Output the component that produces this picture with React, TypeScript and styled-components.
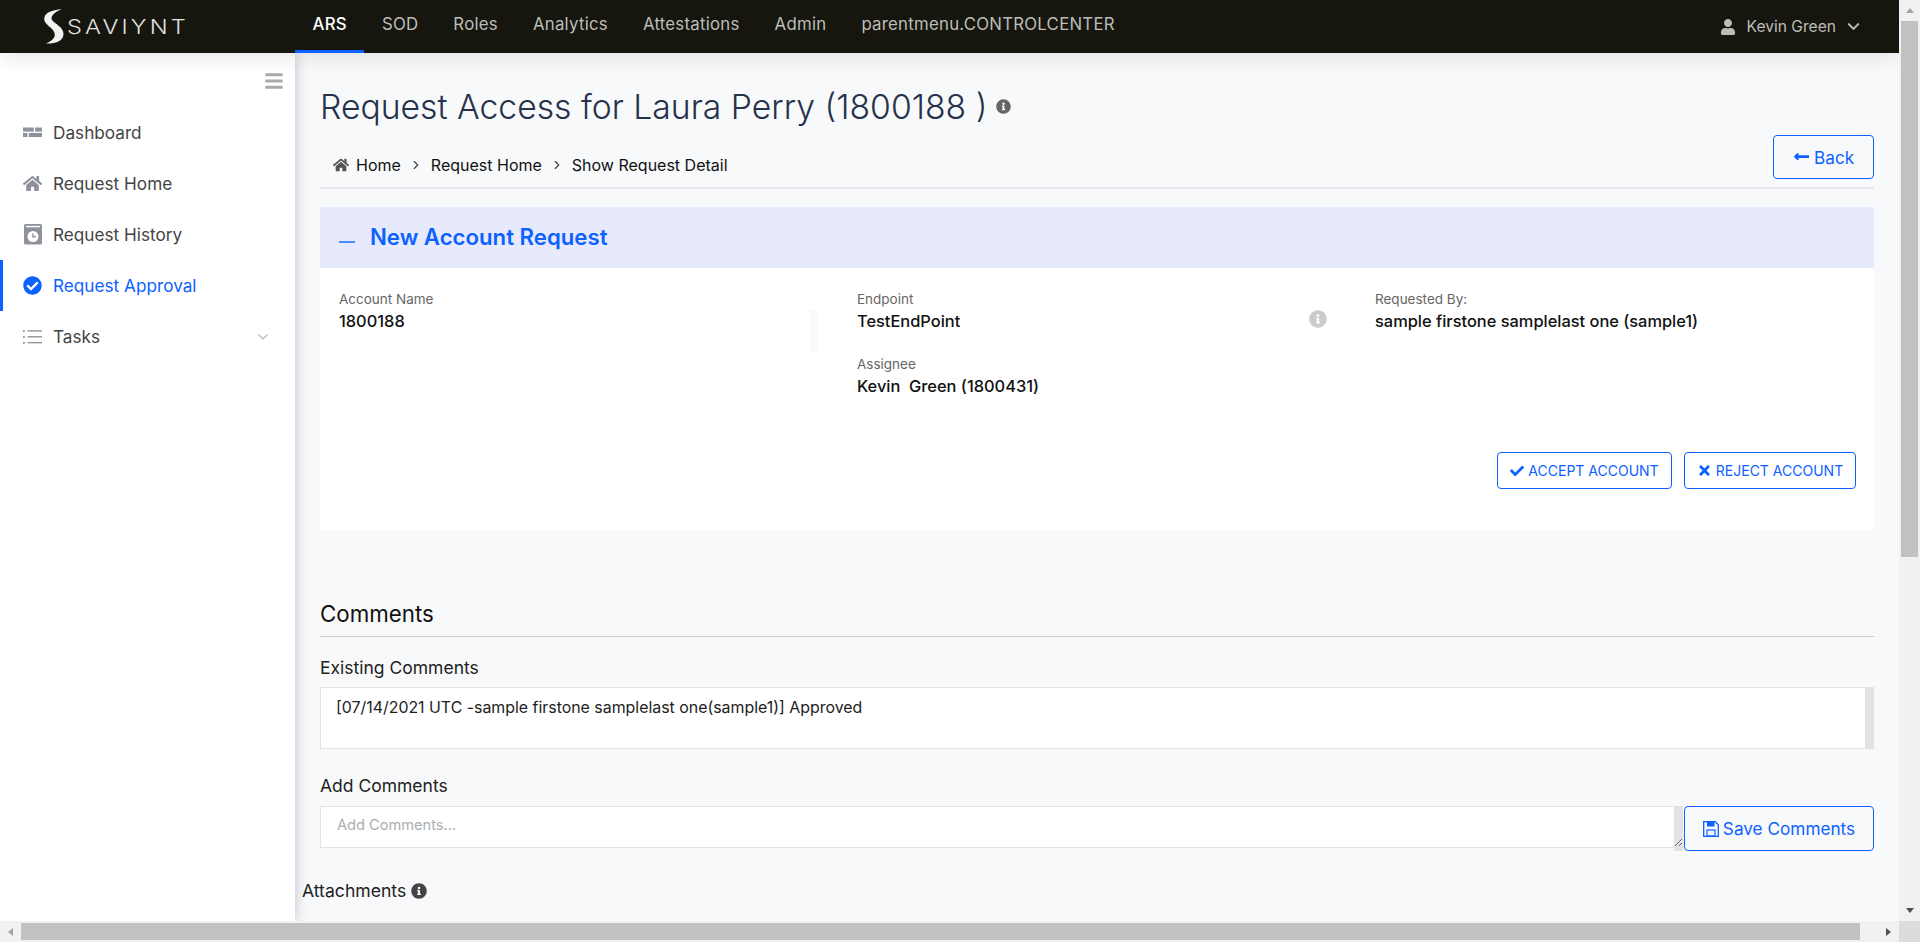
import React from 'react';
import styled, { createGlobalStyle } from 'styled-components';
import { FaHome, FaInfoCircle, FaCheck, FaTimes, FaUser, FaBars, FaCheckCircle, FaLongArrowAltLeft } from 'react-icons/fa';
import { LuChevronDown, LuChevronRight } from 'react-icons/lu';

const BLUE = '#0d62ff';
const FONT = `Inter, Roboto, "Liberation Sans", sans-serif`;

const Global = createGlobalStyle`
  html, body { margin: 0; padding: 0; height: 100%; overflow: hidden; }
  body { font-family: ${FONT}; color: #111; background: #f8f9fb; }
  * { box-sizing: border-box; }
`;

const Frame = styled.div`
  width: 100vw;
  height: 100vh;
  display: grid;
  grid-template-columns: 1fr 21px;
  grid-template-rows: 1fr 21px;
  background: #f8f9fb;
`;

const Viewport = styled.div`
  overflow: hidden;
  min-width: 0;
  min-height: 0;
`;

const VBar = styled.div`
  display: flex;
  flex-direction: column;
  background: #f1f1f1;
`;

const HBar = styled.div`
  display: flex;
  background: #f1f1f1;
`;

const Corner = styled.div`
  background: #dcdcdc;
`;

const ArrowCell = styled.div`
  width: 21px;
  height: 21px;
  flex: none;
  display: flex;
  align-items: center;
  justify-content: center;
`;

const VEnd = styled.div`
  margin-top: auto;
`;

const HEnd = styled.div`
  margin-left: auto;
`;

const Arrow = styled.span<{ $dir: 'up' | 'down' | 'left' | 'right'; $c: string }>`
  width: 0;
  height: 0;
  border-style: solid;
  border-color: transparent;
  ${(p) => p.$dir === 'up' && `border-width: 0 4.5px 5px; border-bottom-color: ${p.$c};`}
  ${(p) => p.$dir === 'down' && `border-width: 5px 4.5px 0; border-top-color: ${p.$c};`}
  ${(p) => p.$dir === 'left' && `border-width: 4.5px 5px 4.5px 0; border-right-color: ${p.$c};`}
  ${(p) => p.$dir === 'right' && `border-width: 4.5px 0 4.5px 5px; border-left-color: ${p.$c};`}
`;

const VThumb = styled.div`
  height: 536px;
  margin: 0 2px;
  background: #c1c1c1;
`;

const HThumb = styled.div`
  width: 1839px;
  margin: 2px 0;
  background: #c1c1c1;
`;

const Shell = styled.div`
  width: 1918px;
  height: 100%;
  display: flex;
  flex-direction: column;
`;

const Header = styled.header`
  position: relative;
  z-index: 5;
  width: 1899px;
  height: 53px;
  flex: none;
  display: flex;
  align-items: stretch;
  background: #16160f;
  box-shadow: 0 4px 20px rgba(0, 0, 0, 0.1);
`;

const Logo = styled.div`
  width: 295px;
  flex: none;
  display: flex;
  align-items: center;
  padding-left: 43px;
  gap: 3px;
  color: #e2e2e2;
`;

const LogoText = styled.span`
  font-size: 19.5px;
  font-weight: 300;
  letter-spacing: 2.6px;
  transform: scaleX(1.21);
  transform-origin: left center;
`;

const Nav = styled.nav`
  display: flex;
  flex: 1;
`;

const Tab = styled.a<{ $active?: boolean }>`
  display: flex;
  align-items: center;
  padding: 0 17.5px 3px;
  height: 53px;
  font-size: 16.8px;
  letter-spacing: 0.25px;
  font-weight: ${(p) => (p.$active ? 500 : 400)};
  color: ${(p) => (p.$active ? '#fff' : '#bdbdb9')};
  border-bottom: 3px solid ${(p) => (p.$active ? BLUE : 'transparent')};
`;

const UserBox = styled.div`
  display: flex;
  align-items: center;
  color: #bdbdb9;
  font-size: 15.6px;
  padding-right: 36px;
  gap: 11px;
`;

const UserChevron = styled(LuChevronDown)`
  font-size: 19px;
  margin-left: -3px;
  stroke-width: 2.6;
`;

const Body = styled.div`
  display: flex;
  flex: 1;
  min-height: 0;
`;

const Sidebar = styled.aside`
  width: 295px;
  flex: none;
  background: #fff;
  box-shadow: 0 0 12px rgba(40, 40, 60, 0.28);
  padding-top: 18px;
  z-index: 2;
`;

const Burger = styled.div`
  display: flex;
  justify-content: flex-end;
  padding-right: 11px;
  height: 36px;
  color: #aaa;
  font-size: 20px;
`;

const SideList = styled.ul`
  list-style: none;
  margin: 0;
  padding: 0;
`;

const SideItem = styled.li<{ $active?: boolean }>`
  display: flex;
  align-items: center;
  height: 51px;
  padding: 0 0 0 23px;
  gap: 11px;
  font-size: 17.2px;
  color: ${(p) => (p.$active ? BLUE : '#444')};
  box-shadow: ${(p) => (p.$active ? `inset 3px 0 0 ${BLUE}` : 'none')};
`;

const SideIcon = styled.span<{ $active?: boolean }>`
  width: 19px;
  height: 20px;
  display: flex;
  align-items: center;
  justify-content: center;
  font-size: 19px;
  color: ${(p) => (p.$active ? BLUE : '#8e939b')};
`;

const SideChevron = styled.span`
  margin-left: auto;
  margin-right: 24px;
  color: #bbb;
  font-size: 16px;
  display: flex;
`;

const Main = styled.main`
  flex: 1;
  min-width: 0;
  padding: 29px 44px 0 25px;
`;

const Title = styled.h1`
  margin: 0;
  height: 48px;
  display: flex;
  align-items: center;
  gap: 9px;
  font-size: 33.7px;
  font-weight: 300;
  color: #26324a;
  & svg { font-size: 15px; color: #666; }
`;

const CrumbRow = styled.div`
  height: 59px;
  display: flex;
  justify-content: space-between;
  border-bottom: 2px solid #e6e8eb;
`;

const Crumbs = styled.div`
  align-self: flex-end;
  height: 24px;
  margin-bottom: 10px;
  padding-left: 13px;
  display: flex;
  align-items: center;
  font-size: 16px;
  color: #111;
`;

const HomeGlyph = styled(FaHome)`
  font-size: 16px;
  color: #555;
  margin-right: 7px;
`;

const CrumbSep = styled(LuChevronRight)`
  font-size: 14px;
  color: #444;
  margin: 0 8px;
`;

const OutlineButton = styled.button<{ $h: number; $w: number; $fs: number }>`
  width: ${(p) => p.$w}px;
  height: ${(p) => p.$h}px;
  flex: none;
  display: inline-flex;
  align-items: center;
  justify-content: center;
  gap: 4px;
  padding: 0;
  border: 1px solid ${BLUE};
  border-radius: 4px;
  background: transparent;
  color: ${BLUE};
  font-family: ${FONT};
  font-size: ${(p) => p.$fs}px;
  & svg { flex: none; }
`;

const BackButton = styled(OutlineButton)`
  margin-top: 5px;
`;

const PanelHead = styled.div`
  margin-top: 18px;
  height: 61px;
  background: #e7eafc;
  display: flex;
  align-items: center;
  padding: 0 0 2px 19px;
  gap: 15px;
  font-size: 22.2px;
  font-weight: 600;
  color: ${BLUE};
`;

const Dash = styled.span`
  width: 16px;
  height: 1.5px;
  background: #4d8bff;
  margin-top: 11px;
`;

const PanelBody = styled.div`
  background: #fff;
  height: 262px;
  padding: 22px 18px 41px 19px;
`;

const Columns = styled.div`
  display: grid;
  grid-template-columns: repeat(3, 518px);
  height: 108px;
`;

const Col = styled.div<{ $pr?: number }>`
  display: flex;
  justify-content: space-between;
  align-items: flex-start;
  padding-right: ${(p) => p.$pr ?? 0}px;
`;

const Label = styled.div<{ $gap?: boolean }>`
  font-size: 13.5px;
  line-height: 18px;
  color: #666;
  margin-top: ${(p) => (p.$gap ? 22 : 0)}px;
`;

const Value = styled.div`
  font-size: 16.4px;
  line-height: 24px;
  font-weight: 500;
  color: #111;
  margin-top: 1px;
`;

const FaintBar = styled.div`
  width: 9px;
  height: 42px;
  margin-top: 20px;
  background: #fafafa;
`;

const MutedInfo = styled(FaInfoCircle)`
  font-size: 18px;
  color: #ccc;
  margin-top: 20px;
`;

const Actions = styled.div`
  display: flex;
  justify-content: flex-end;
  gap: 12px;
  margin-top: 54px;
`;

const SectionTitle = styled.h2`
  margin: 70px 0 0;
  font-size: 22.3px;
  line-height: 28px;
  font-weight: 400;
  padding-bottom: 8px;
  border-bottom: 1px solid #ccc;
  color: #111;
`;

const FieldLabel = styled.div<{ $mt: number }>`
  margin-top: ${(p) => p.$mt}px;
  font-size: 17.5px;
  line-height: 24px;
  color: #222;
`;

const GUTTER = 'linear-gradient(to left, #e2e2e2 9px, #fff 9px)';

const CommentLog = styled.div`
  margin-top: 7px;
  height: 62px;
  background: ${GUTTER};
  border: 1px solid #e2e2e2;
  border-right: 0;
  padding: 9px 15px;
  font-size: 15.9px;
  line-height: 22px;
  color: #222;
`;

const CommentRow = styled.div`
  margin-top: 8px;
  display: flex;
  gap: 1px;
  align-items: flex-start;
`;

const InputWrap = styled.div`
  position: relative;
  width: 1363px;
  height: 42px;
  flex: none;
  &::after {
    content: '';
    position: absolute;
    top: 100%;
    right: 0;
    width: 9px;
    height: 3px;
    background: #e2e2e2;
  }
`;

const CommentInput = styled.textarea`
  display: block;
  width: 100%;
  height: 42px;
  resize: vertical;
  border: 1px solid #e2e2e2;
  border-right: 0;
  background: ${GUTTER};
  padding: 8px 16px;
  font-family: ${FONT};
  font-size: 14.6px;
  line-height: 20px;
  color: #222;
  outline: none;
  &::placeholder { color: #a9adb3; }
`;

const Attachments = styled.div`
  margin: 28px 0 0 -18px;
  display: flex;
  align-items: center;
  gap: 5px;
  font-size: 17.6px;
  line-height: 24px;
  color: #222;
  & svg { font-size: 16px; color: #444; }
`;

const LogoMark = () => (
  <svg width="21" height="35" viewBox="0 0 21 35" fill="#f2f2f2" aria-hidden="true">
    <path d="M19 0C10 1 3 3 1.500 8C0 13 5 16 9 20C12 23 13 27 10 30C8 32 5 33.500 3 34.500C10 35 20.500 33 20.500 25C20.500 18 12 15 9 11C7 8 11 3 19 0Z" />
  </svg>
);

const DashIcon = () => (
  <svg width="21" height="11" viewBox="0 0 21 11" fill="currentColor" aria-hidden="true">
    <rect x="0" y="0" width="12" height="4.500" />
    <rect x="13.500" y="0" width="7.500" height="4.500" />
    <rect x="0" y="6" width="5" height="4.500" />
    <rect x="6.500" y="6" width="14.500" height="4.500" />
  </svg>
);

const HistoryIcon = () => (
  <svg width="18" height="21" viewBox="0 0 18 21" aria-hidden="true">
    <rect x="0" y="0" width="18" height="20.500" rx="1.500" fill="currentColor" />
    <rect x="2" y="1.800" width="14" height="1.500" fill="#fff" />
    <circle cx="9" cy="12.500" r="5.500" fill="#fff" />
    <path d="M9 9.500V12.800H11.800" stroke="currentColor" strokeWidth="1.400" fill="none" />
  </svg>
);

const TasksIcon = () => (
  <svg width="21" height="16" viewBox="0 0 21 16" fill="currentColor" aria-hidden="true">
    <rect x="0" y="0.500" width="2" height="2" />
    <rect x="0" y="7" width="2" height="2" />
    <rect x="0" y="13.500" width="2" height="2" />
    <rect x="5" y="0.500" width="16" height="1.500" />
    <rect x="5" y="7" width="16" height="1.500" />
    <rect x="5" y="13.500" width="16" height="1.500" />
  </svg>
);

const SaveIcon = () => (
  <svg width="16" height="16" viewBox="0 0 16 16" aria-hidden="true">
    <path d="M0.700 0.700H12.300L15.300 3.700V15.300H0.700Z" fill="none" stroke="currentColor" strokeWidth="1.300" />
    <rect x="4" y="1" width="7.500" height="4.500" fill="currentColor" />
    <rect x="4" y="9" width="8" height="6" fill="none" stroke="currentColor" strokeWidth="1.200" />
  </svg>
);

const BoldCheck = styled(FaCheck)`
  font-size: 14px;
`;

const BoldCross = styled(FaTimes)`
  font-size: 15px;
`;

const tabs = ['ARS', 'SOD', 'Roles', 'Analytics', 'Attestations', 'Admin', 'parentmenu.CONTROLCENTER'];

export default function App() {
  return (
    <Frame>
      <Global />
      <Viewport>
        <Shell>
          <Header>
            <Logo>
              <LogoMark />
              <LogoText>SAVIYNT</LogoText>
            </Logo>
            <Nav>
              {tabs.map((t, i) => (
                <Tab key={t} $active={i === 0}>{t}</Tab>
              ))}
            </Nav>
            <UserBox>
              <FaUser size={16} />
              <span>Kevin Green</span>
              <UserChevron />
            </UserBox>
          </Header>
          <Body>
            <Sidebar>
              <Burger><FaBars /></Burger>
              <SideList>
                <SideItem><SideIcon><DashIcon /></SideIcon>Dashboard</SideItem>
                <SideItem><SideIcon><FaHome /></SideIcon>Request Home</SideItem>
                <SideItem><SideIcon><HistoryIcon /></SideIcon>Request History</SideItem>
                <SideItem $active><SideIcon $active><FaCheckCircle /></SideIcon>Request Approval</SideItem>
                <SideItem>
                  <SideIcon><TasksIcon /></SideIcon>Tasks
                  <SideChevron><LuChevronDown /></SideChevron>
                </SideItem>
              </SideList>
            </Sidebar>
            <Main>
              <Title>Request Access for Laura Perry (1800188 ) <FaInfoCircle /></Title>
              <CrumbRow>
                <Crumbs>
                  <HomeGlyph />Home<CrumbSep />Request Home<CrumbSep />Show Request Detail
                </Crumbs>
                <BackButton $w={101} $h={44} $fs={17.2}><FaLongArrowAltLeft />Back</BackButton>
              </CrumbRow>
              <PanelHead><Dash />New Account Request</PanelHead>
              <PanelBody>
                <Columns>
                  <Col $pr={39}>
                    <div>
                      <Label>Account Name</Label>
                      <Value>1800188</Value>
                    </div>
                    <FaintBar />
                  </Col>
                  <Col $pr={48}>
                    <div>
                      <Label>Endpoint</Label>
                      <Value>TestEndPoint</Value>
                      <Label $gap>Assignee</Label>
                      <Value>Kevin&nbsp; Green (1800431)</Value>
                    </div>
                    <MutedInfo />
                  </Col>
                  <Col>
                    <div>
                      <Label>Requested By:</Label>
                      <Value>sample firstone samplelast one (sample1)</Value>
                    </div>
                  </Col>
                </Columns>
                <Actions>
                  <OutlineButton $w={175} $h={37} $fs={14}><BoldCheck />ACCEPT ACCOUNT</OutlineButton>
                  <OutlineButton $w={172} $h={37} $fs={14}><BoldCross />REJECT ACCOUNT</OutlineButton>
                </Actions>
              </PanelBody>
              <SectionTitle>Comments</SectionTitle>
              <FieldLabel $mt={19}>Existing Comments</FieldLabel>
              <CommentLog>[07/14/2021 UTC -sample firstone samplelast one(sample1)] Approved</CommentLog>
              <FieldLabel $mt={25}>Add Comments</FieldLabel>
              <CommentRow>
                <InputWrap>
                  <CommentInput placeholder="Add Comments..." />
                </InputWrap>
                <OutlineButton $w={190} $h={45} $fs={17.2}><SaveIcon />Save Comments</OutlineButton>
              </CommentRow>
              <Attachments>Attachments <FaInfoCircle /></Attachments>
            </Main>
          </Body>
        </Shell>
      </Viewport>
      <VBar>
        <ArrowCell><Arrow $dir="up" $c="#a3a3a3" /></ArrowCell>
        <VThumb />
        <VEnd><ArrowCell><Arrow $dir="down" $c="#505050" /></ArrowCell></VEnd>
      </VBar>
      <HBar>
        <ArrowCell><Arrow $dir="left" $c="#a3a3a3" /></ArrowCell>
        <HThumb />
        <HEnd><ArrowCell><Arrow $dir="right" $c="#505050" /></ArrowCell></HEnd>
      </HBar>
      <Corner />
    </Frame>
  );
}
